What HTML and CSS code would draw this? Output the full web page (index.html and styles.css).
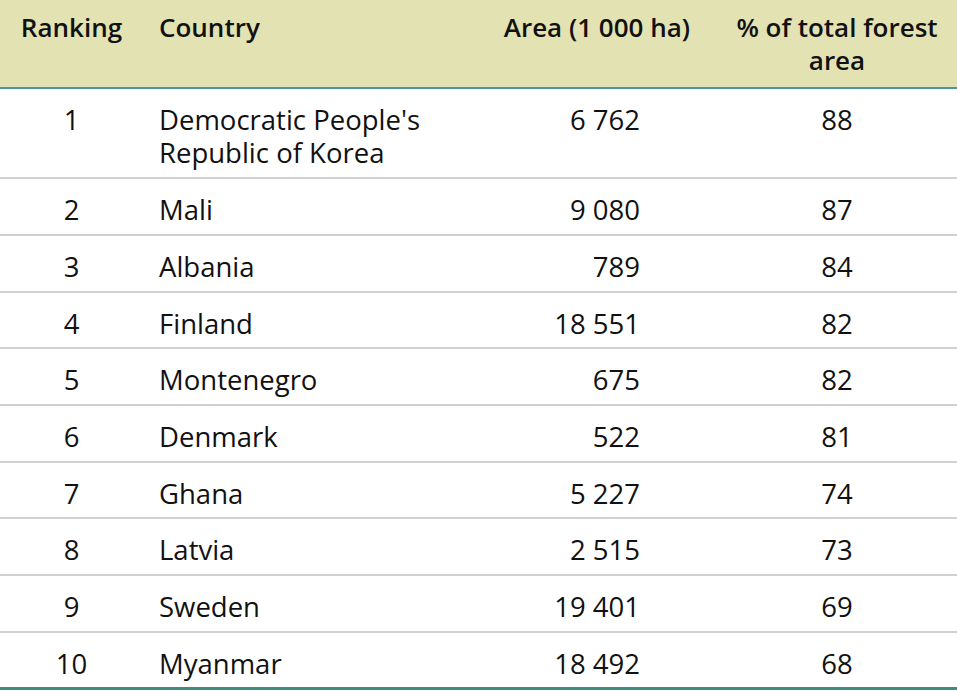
FILE: index.html
```html
<!DOCTYPE html>
<html lang="en">
<head>
<meta charset="utf-8">
<title>Forest area ranking</title>
<link rel="stylesheet" href="styles.css">
</head>
<body>
<table class="forest-table">
  <colgroup>
    <col class="col-rank">
    <col class="col-country">
    <col class="col-area">
    <col class="col-pct">
  </colgroup>
  <thead>
    <tr>
      <th class="rank">Ranking</th>
      <th class="country">Country</th>
      <th class="area">Area (1 000 ha)</th>
      <th class="pct">% of total forest area</th>
    </tr>
  </thead>
  <tbody>
    <tr class="first"><td class="rank">1</td><td class="country">Democratic People's Republic of Korea</td><td class="area">6 762</td><td class="pct">88</td></tr>
    <tr><td class="rank">2</td><td class="country">Mali</td><td class="area">9 080</td><td class="pct">87</td></tr>
    <tr><td class="rank">3</td><td class="country">Albania</td><td class="area">789</td><td class="pct">84</td></tr>
    <tr><td class="rank">4</td><td class="country">Finland</td><td class="area">18 551</td><td class="pct">82</td></tr>
    <tr><td class="rank">5</td><td class="country">Montenegro</td><td class="area">675</td><td class="pct">82</td></tr>
    <tr><td class="rank">6</td><td class="country">Denmark</td><td class="area">522</td><td class="pct">81</td></tr>
    <tr><td class="rank">7</td><td class="country">Ghana</td><td class="area">5 227</td><td class="pct">74</td></tr>
    <tr><td class="rank">8</td><td class="country">Latvia</td><td class="area">2 515</td><td class="pct">73</td></tr>
    <tr><td class="rank">9</td><td class="country">Sweden</td><td class="area">19 401</td><td class="pct">69</td></tr>
    <tr class="last"><td class="rank">10</td><td class="country">Myanmar</td><td class="area">18 492</td><td class="pct">68</td></tr>
  </tbody>
</table>
</body>
</html>
```
FILE: styles.css
```css
html, body {
  margin: 0;
  padding: 0;
  background: #ffffff;
}

.forest-table {
  width: 957px;
  border-collapse: collapse;
  table-layout: fixed;
  font-family: "Open Sans", "Liberation Sans", sans-serif;
  font-size: 27.5px;
  line-height: 32.67px;
  color: #111111;
}

.col-rank { width: 143px; }
.col-country { width: 330px; }
.col-area { width: 244px; }
.col-pct { width: 240px; }

.forest-table th,
.forest-table td {
  padding: 15px 0 7px;
  vertical-align: top;
}

.forest-table thead th {
  background: #e3e2b3;
  font-size: 26px;
  font-weight: 600;
  border-bottom: 2px solid #4b93a3;
  padding-top: 11px;
  padding-bottom: 10.5px;
}

.forest-table td {
  border-bottom: 2px solid #d0d0d0;
  font-weight: 400;
}

.forest-table tr.first td {
  padding-bottom: 8px;
}

.forest-table tr.last td {
  border-bottom: 3px solid #3f8c7b;
}

.rank { text-align: center; }
.country { text-align: left; padding-left: 16px !important; }
th.area { text-align: right; padding-right: 27px !important; }
td.area { text-align: right; padding-right: 77px !important; }
.pct { text-align: center; }
th.pct { padding-left: 14px !important; padding-right: 14px !important; }
```
